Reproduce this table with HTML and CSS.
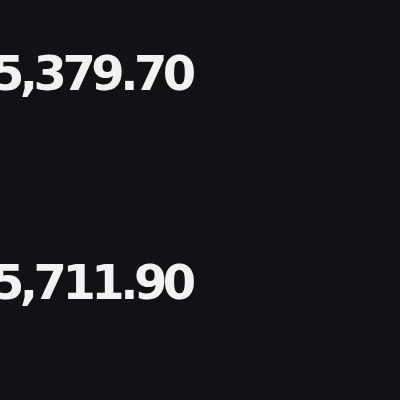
FILE: index.html
```html
<!DOCTYPE html>
<html lang="en">
<head>
    <meta charset="UTF-8">
    <title>Balances</title>
    <link rel="stylesheet" href="styles.css">
</head>
<body>
    <div class="balances">
        <div class="amount">$5,379.70</div>
        <div class="amount">$5,711.90</div>
    </div>
</body>
</html>
```

FILE: styles.css
```css
* {
    margin: 0;
    padding: 0;
    box-sizing: border-box;
}
body {
    background: #121116;
    color: #f2f2f2;
    font-family: "DejaVu Sans", sans-serif;
    height: 100vh;
    overflow: hidden;
}
.balances {
    display: flex;
    flex-direction: column;
    gap: 149px;
    padding-top: 43px;
    margin-left: -38px;
}
.amount {
    font-size: 48px;
    font-weight: bold;
    letter-spacing: -4.5px;
    line-height: 60px;
    white-space: nowrap;
    filter: blur(0.5px);
}
```
